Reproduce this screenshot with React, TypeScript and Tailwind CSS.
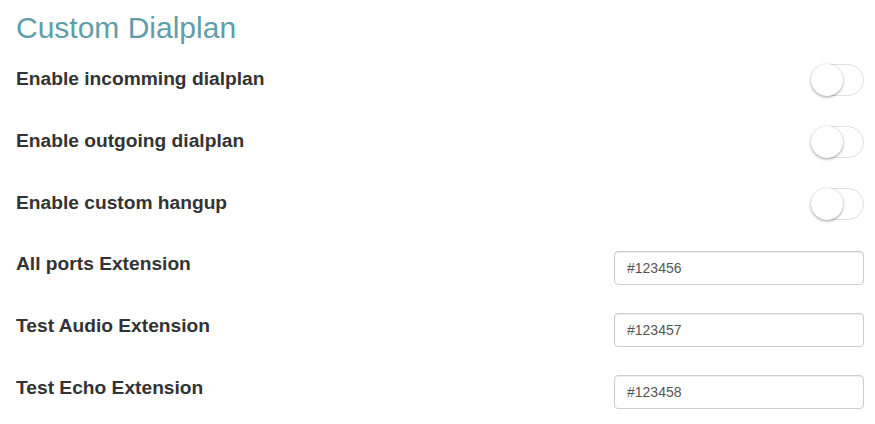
import { useState } from 'react'

const toggles = ['Enable incomming dialplan', 'Enable outgoing dialplan', 'Enable custom hangup']

const extensions = [
  { label: 'All ports Extension', value: '#123456' },
  { label: 'Test Audio Extension', value: '#123457' },
  { label: 'Test Echo Extension', value: '#123458' }
]

function Toggle() {
  const [on, setOn] = useState(false)
  return (
    <button
      onClick={() => setOn(!on)}
      className={`relative w-[53px] h-[32px] rounded-full border border-[#dfdfdf] ${on ? 'bg-[#64bd63]' : 'bg-white'}`}
    >
      <span
        className={`absolute top-[-1px] ${on ? 'left-[20px]' : 'left-[-1px]'} w-[32px] h-[32px] rounded-full bg-white shadow-[0_1px_3px_rgba(0,0,0,0.4)]`}
      />
    </button>
  )
}

export default function App() {
  return (
    <div className="w-[875px] h-[424px] bg-white font-['Liberation_Sans',Arial,sans-serif] text-[#333]">
      {/* Header */}
      <div className="h-[49px] pl-4 pt-[10px]">
        <h3 className="text-[30px] leading-[36px] text-[#5f9ea8]">Custom Dialplan</h3>
      </div>

      {toggles.map((label) => (
        <div key={label} className="h-[62px] flex items-center justify-between pl-4 pr-[11px]">
          <span className="text-[19.2px] font-bold mb-[2px]">{label}</span>
          <Toggle />
        </div>
      ))}

      {extensions.map((ext) => (
        <div key={ext.label} className="h-[62px] flex items-center justify-between pl-4 pr-[11px]">
          <span className="text-[19.2px] font-bold mb-1">{ext.label}</span>
          <input
            defaultValue={ext.value}
            className="w-[250px] h-[34px] mt-1 px-3 text-[14px] text-[#555] border border-[#ccc] rounded shadow-[inset_0_1px_1px_rgba(0,0,0,0.075)] outline-none"
          />
        </div>
      ))}
    </div>
  )
}
